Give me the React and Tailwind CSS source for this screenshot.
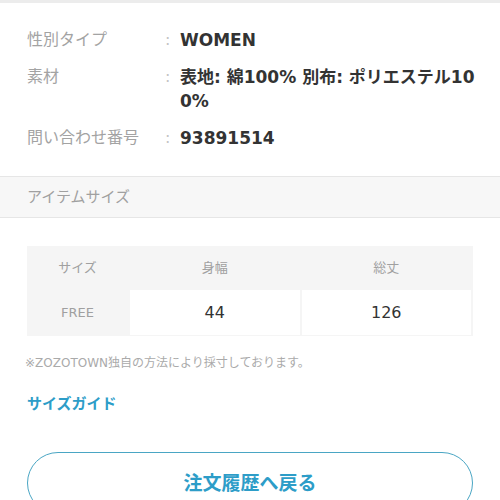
export default function App() {
  const font = { fontFamily: '"DejaVu Sans", "Noto Sans CJK JP", sans-serif' };
  return (
    <div className="w-[500px] h-[500px] overflow-hidden bg-white" style={font}>
      <div className="h-[3px] bg-[#ececec]" />
      <div className="pt-[25px] pb-[26px] pl-[27px] flex flex-col gap-[13px]">
        {[
          ["性別タイプ", "WOMEN"],
          ["素材", "表地: 綿100% 別布: ポリエステル100%"],
          ["問い合わせ番号", "93891514"],
        ].map(([k, v]) => (
          <div key={k} className="flex leading-[24px]">
            <div className="w-[138px] shrink-0 text-[16px] text-[#a3a3a3]">{k}</div>
            <div className="w-[15px] shrink-0 text-[16px] text-[#c4c4c4]">:</div>
            <div className="w-[303px] text-[17px] font-semibold text-[#333] break-all">{v}</div>
          </div>
        ))}
      </div>
      <div className="border-t border-b border-[#e6e6e6] bg-[#f7f7f7] h-[42px] flex items-center pl-[27px] text-[15px] text-[#a0a0a0]">
        アイテムサイズ
      </div>
      <div className="pt-[28px] px-[27px]">
        <div className="grid grid-cols-[101px_1fr_1fr] gap-x-[2px] gap-y-[1px] bg-[#f5f5f5] pr-[2px] pb-[1px]">
          <div className="h-[43px] flex items-center justify-center text-[13px] text-[#a0a0a0]">サイズ</div>
          <div className="h-[43px] flex items-center justify-center text-[13px] text-[#a0a0a0]">身幅</div>
          <div className="h-[43px] flex items-center justify-center text-[13px] text-[#a0a0a0]">総丈</div>
          <div className="h-[45px] flex items-center justify-center text-[13px] text-[#a0a0a0]">FREE</div>
          <div className="h-[45px] flex items-center justify-center bg-white text-[16px] text-[#333]">44</div>
          <div className="h-[45px] flex items-center justify-center bg-white text-[16px] text-[#333]">126</div>
        </div>
        <div className="mt-[19px] text-[12px] leading-[16px] text-[#aaa] -ml-[2px]">※ZOZOTOWN独自の方法により採寸しております。</div>
        <div className="mt-[23px] text-[15px] leading-[20px] font-bold text-[#2d9dc8]">サイズガイド</div>
        <div className="mt-[38px] h-[62px] rounded-full border border-[#4aa6c4] flex items-center justify-center text-[19px] font-bold text-[#2d9dc8]">
          注文履歴へ戻る
        </div>
      </div>
    </div>
  );
}
